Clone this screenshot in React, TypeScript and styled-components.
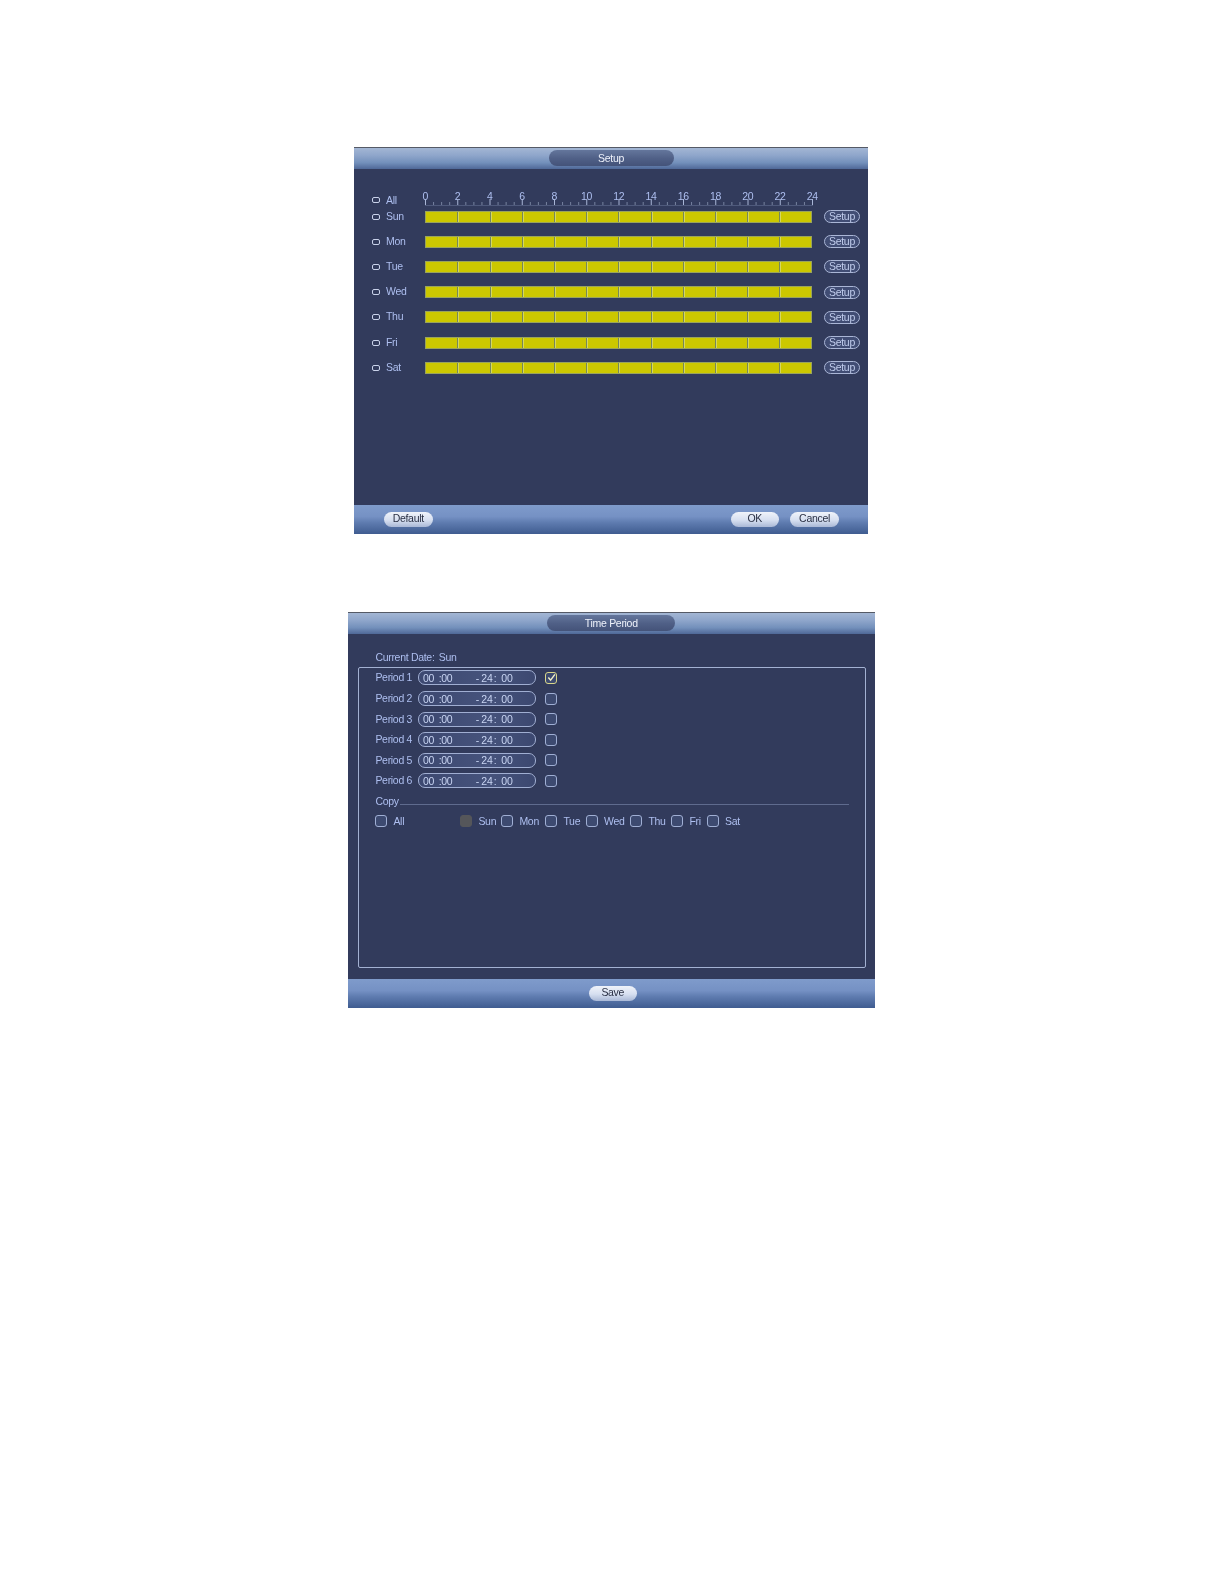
import React from "react";
import styled, { createGlobalStyle } from "styled-components";

const GlobalStyle = createGlobalStyle`
  html, body {
    margin: 0;
    padding: 0;
    background: #fff;
  }
  body {
    font-family: "Liberation Sans", Arial, sans-serif;
    font-size: 10.5px;
    letter-spacing: -0.3px;
  }
`;

const Page = styled.div`
  width: 1224px;
  height: 1584px;
  padding-top: 147px;
  box-sizing: border-box;
  display: flex;
  flex-direction: column;
`;

const Panel = styled.div<{ $left: number; $width: number; $height: number; $top?: number }>`
  margin-left: ${(p) => p.$left}px;
  margin-top: ${(p) => p.$top || 0}px;
  width: ${(p) => p.$width}px;
  height: ${(p) => p.$height}px;
  background: #323b5c;
  display: flex;
  flex-direction: column;
  color: #aebff0;
  flex: none;
  filter: blur(0.35px);
`;

const TitleBar = styled.div`
  height: 22px;
  flex: none;
  box-sizing: border-box;
  border-top: 1px solid #555a66;
  background: linear-gradient(#a3b6d4 0%, #8fa6cb 35%, #7390bb 70%, #4f6898 100%);
  display: flex;
  justify-content: center;
  align-items: center;
`;

const TitlePill = styled.div<{ $width: number }>`
  width: ${(p) => p.$width}px;
  height: 16px;
  margin-top: -1px;
  border-radius: 8px;
  background: linear-gradient(#64769c, #4f5f86 55%, #445379);
  color: #eef2fb;
  line-height: 16px;
  text-align: center;
`;

const Body = styled.div`
  flex: 1;
  min-height: 0;
  display: flex;
  flex-direction: column;
  box-sizing: border-box;
`;

const Footer = styled.div<{ $height: number; $center?: boolean }>`
  height: ${(p) => p.$height}px;
  flex: none;
  box-sizing: border-box;
  background: linear-gradient(#7f9bcb 0%, #7591c4 40%, #5f7cb0 60%, #3f5c90 100%);
  display: flex;
  align-items: center;
  justify-content: ${(p) => (p.$center ? "center" : "flex-start")};
`;

const FooterButton = styled.div`
  width: 48.5px;
  height: 15px;
  margin-top: -1px;
  border-radius: 8px;
  background: linear-gradient(#f0f3fa, #d6dff0 55%, #a9b8d6);
  color: #2a3044;
  line-height: 13px;
  text-align: center;
`;

const FooterGap = styled.div<{ $width: number }>`
  width: ${(p) => p.$width}px;
  flex: none;
`;

/* schedule panel */

const ScheduleBody = styled(Body)`
  padding: 21px 0 0 18px;
`;

const RulerRow = styled.div`
  display: flex;
  height: 15px;
  align-items: flex-end;
`;

const AllLabel = styled.div`
  width: 53.3px;
  display: flex;
  align-items: center;
  flex: none;
  height: 14px;
  margin-bottom: -2px;
`;

const Ruler = styled.div`
  width: 387px;
  height: 15px;
  position: relative;
`;

const RulerNumbers = styled.div`
  display: flex;
  justify-content: space-between;
  margin: 0 -8px;
  line-height: 12px;
`;

const RulerNumber = styled.span`
  width: 16px;
  text-align: center;
`;

const RulerTicks = styled.svg`
  position: absolute;
  left: 0;
  bottom: -1px;
`;

const RowsShift = styled.div`
  margin-top: -1px;
`;

const DayRow = styled.div`
  display: flex;
  align-items: center;
  height: 25.2px;
`;

const DayLabel = styled.div`
  width: 53.3px;
  flex: none;
  display: flex;
  align-items: center;
  padding-bottom: 2px;
`;

const Radio = styled.span`
  width: 8px;
  height: 6px;
  box-sizing: border-box;
  border: 1.5px solid #c9d2ea;
  border-radius: 2px;
  margin-right: 6px;
  flex: none;
`;

const DayRadio = styled(Radio)`
  margin-top: 2px;
`;

const Bar = styled.div`
  width: 387px;
  height: 12px;
  display: flex;
  flex: none;
  box-sizing: border-box;
  border: 1px solid #9aa45c;
`;

const Hour = styled.div`
  flex: 1;
  background: #ccc800;
  border-left: 1px solid #76885a;
  box-shadow: inset 1px 0 0 #d6d860;

  &:first-child {
    border-left: none;
    box-shadow: none;
  }
`;

const SetupButton = styled.div`
  width: 36px;
  height: 13px;
  margin-left: 11.7px;
  box-sizing: border-box;
  border: 1px solid #aab6d6;
  border-radius: 7px;
  background: #414d74;
  color: #c0ccec;
  line-height: 11px;
  text-align: center;
`;

/* time period panel */

const PeriodBody = styled(Body)`
  padding: 14px 9px 11px 10px;
`;

const DateRow = styled.div`
  display: flex;
  height: 18.7px;
  padding-left: 17.4px;
  align-items: center;
`;

const DateCaption = styled.span`
  width: 63.3px;
`;

const GroupBox = styled.div`
  flex: 1;
  border: 1px solid #a3b1d2;
  border-radius: 2px;
  padding: 0 16px 0 16.4px;
  display: flex;
  flex-direction: column;
`;

const PeriodRow = styled.div`
  height: 20.6px;
  display: flex;
  align-items: center;
`;

const PeriodName = styled.span`
  width: 42.6px;
  flex: none;
  margin-top: -1px;
`;

const TimeInput = styled.div`
  width: 118px;
  height: 15px;
  flex: none;
  box-sizing: border-box;
  border: 1px solid #a0aed2;
  border-radius: 7px;
  background: linear-gradient(90deg, #3c4870, #46537c 60%, #3c4870);
  display: flex;
  align-items: center;
  padding-left: 4px;
  color: #c8d4f2;
`;

const TimePart = styled.span<{ $width: number }>`
  width: ${(p) => p.$width}px;
  flex: none;
`;

const Check = styled.span<{ $state?: "on" | "off" }>`
  width: 12px;
  height: 12px;
  flex: none;
  box-sizing: border-box;
  border-radius: 3px;
  border: 1px solid ${(p) => (p.$state === "on" ? "#d8d68a" : p.$state === "off" ? "#55565a" : "#a0afd4")};
  background: ${(p) => (p.$state === "off" ? "#55565a" : "#3d4a70")};
  display: flex;
  align-items: center;
  justify-content: center;
`;

const PeriodCheck = styled.div`
  margin-left: 9.4px;
  display: flex;
`;

const CopyRow = styled.div`
  height: 20px;
  display: flex;
  align-items: center;
`;

const CopyLine = styled.div`
  flex: 1;
  height: 1px;
  background: #5f6b8e;
  margin: 6px 0 0 1px;
`;

const DaysRow = styled.div`
  height: 20px;
  display: flex;
  align-items: center;
`;

const DayCheck = styled.div<{ $width: number }>`
  width: ${(p) => p.$width}px;
  flex: none;
  display: flex;
  align-items: center;
  gap: 6px;
`;

const days = ["Sun", "Mon", "Tue", "Wed", "Thu", "Fri", "Sat"];
const hours = Array.from({ length: 12 });
const rulerValues = Array.from({ length: 13 }, (_, i) => i * 2);

const copyDays = [
  { name: "Sun", width: 41, state: "off" as const },
  { name: "Mon", width: 44 },
  { name: "Tue", width: 40.6 },
  { name: "Wed", width: 44.4 },
  { name: "Thu", width: 41 },
  { name: "Fri", width: 35.6 },
  { name: "Sat", width: 40 },
];

function Ticks() {
  const ticks = [];
  for (let i = 0; i <= 48; i++) {
    const x = i * 8.0625 + 0.5;
    ticks.push(<line key={i} x1={x} x2={x} y1={i % 4 === 0 ? 1 : 4} y2={7} stroke={i % 4 === 0 ? "#a9b6d6" : "#76829f"} strokeWidth="1" />);
  }
  return (
    <RulerTicks width="388" height="8" viewBox="0 0 388 8">
      {ticks}
      <line x1="0" x2="388" y1="7.5" y2="7.5" stroke="#4f5a7c" strokeWidth="1" />
    </RulerTicks>
  );
}

export default function App() {
  return (
    <Page>
      <GlobalStyle />
      <Panel $left={354} $width={514} $height={387}>
        <TitleBar>
          <TitlePill $width={125}>Setup</TitlePill>
        </TitleBar>
        <ScheduleBody>
          <RulerRow>
            <AllLabel>
              <Radio />
              All
            </AllLabel>
            <Ruler>
              <RulerNumbers>
                {rulerValues.map((v) => (
                  <RulerNumber key={v}>{v}</RulerNumber>
                ))}
              </RulerNumbers>
              <Ticks />
            </Ruler>
          </RulerRow>
          <RowsShift>
            {days.map((d) => (
              <DayRow key={d}>
                <DayLabel>
                  <DayRadio />
                  {d}
                </DayLabel>
                <Bar>
                  {hours.map((_, i) => (
                    <Hour key={i} />
                  ))}
                </Bar>
                <SetupButton>Setup</SetupButton>
              </DayRow>
            ))}
          </RowsShift>
        </ScheduleBody>
        <Footer $height={29}>
          <FooterGap $width={30} />
          <FooterButton>Default</FooterButton>
          <FooterGap $width={298} />
          <FooterButton>OK</FooterButton>
          <FooterGap $width={11.3} />
          <FooterButton>Cancel</FooterButton>
        </Footer>
      </Panel>
      <Panel $left={348} $top={78} $width={526.5} $height={396}>
        <TitleBar>
          <TitlePill $width={128}>Time Period</TitlePill>
        </TitleBar>
        <PeriodBody>
          <DateRow>
            <DateCaption>Current Date:</DateCaption>
            Sun
          </DateRow>
          <GroupBox>
            {[1, 2, 3, 4, 5, 6].map((n) => (
              <PeriodRow key={n}>
                <PeriodName>Period {n}</PeriodName>
                <TimeInput>
                  <TimePart $width={15.7}>00</TimePart>
                  <TimePart $width={37}>:00</TimePart>
                  <TimePart $width={5.7}>-</TimePart>
                  <TimePart $width={12.3}>24</TimePart>
                  <TimePart $width={7.7}>:</TimePart>
                  <TimePart $width={14}>00</TimePart>
                </TimeInput>
                <PeriodCheck>
                  <Check $state={n === 1 ? "on" : undefined}>
                    {n === 1 && (
                      <svg width="9" height="9" viewBox="0 0 10 10">
                        <path d="M1.5 5 L4 8 L8.8 1.5" fill="none" stroke="#f0efc8" strokeWidth="1.6" />
                      </svg>
                    )}
                  </Check>
                </PeriodCheck>
              </PeriodRow>
            ))}
            <CopyRow>
              Copy
              <CopyLine />
            </CopyRow>
            <DaysRow>
              <DayCheck $width={85}>
                <Check />
                All
              </DayCheck>
              {copyDays.map((d) => (
                <DayCheck key={d.name} $width={d.width}>
                  <Check $state={d.state} />
                  {d.name}
                </DayCheck>
              ))}
            </DaysRow>
          </GroupBox>
        </PeriodBody>
        <Footer $height={29} $center>
          <FooterGap $width={3} />
          <FooterButton>Save</FooterButton>
        </Footer>
      </Panel>
    </Page>
  );
}
